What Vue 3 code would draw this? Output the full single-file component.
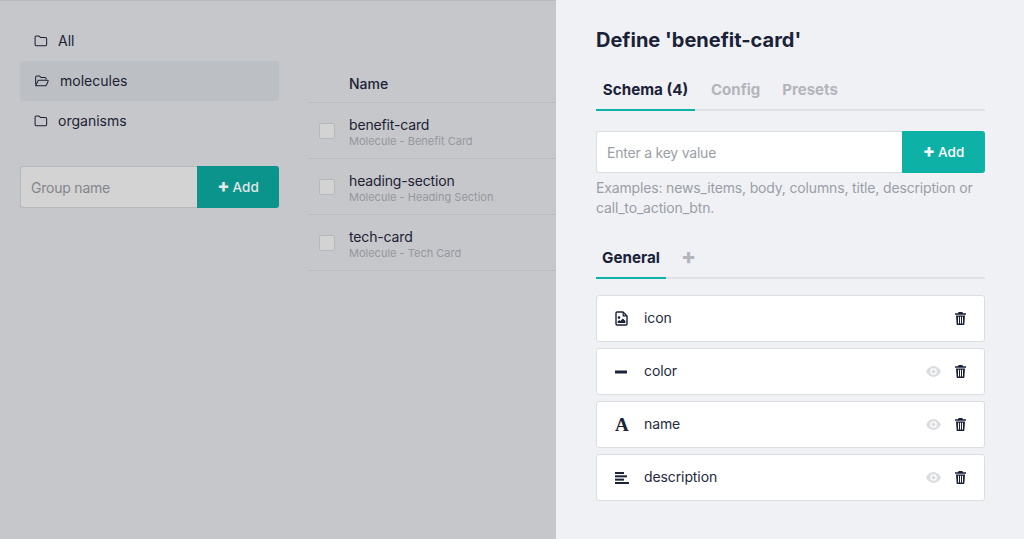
<script setup>
const groups = [
  { name: 'All', open: false },
  { name: 'molecules', open: true },
  { name: 'organisms', open: false }
]
const rows = [
  { name: 'benefit-card', sub: 'Molecule - Benefit Card' },
  { name: 'heading-section', sub: 'Molecule - Heading Section' },
  { name: 'tech-card', sub: 'Molecule - Tech Card' }
]
const fields = [
  { name: 'icon', type: 'image', eye: false },
  { name: 'color', type: 'minus', eye: true },
  { name: 'name', type: 'font', eye: true },
  { name: 'description', type: 'lines', eye: true }
]
</script>

<template>
  <div class="page">
    <div class="under">
      <aside class="side">
        <ul class="groups">
          <li v-for="g in groups" :key="g.name" class="group" :class="{ active: g.open }">
            <svg v-if="!g.open" class="folder" viewBox="0 0 16 14" fill="none" stroke="currentColor" stroke-width="1.2" stroke-linejoin="round">
              <path d="M1.100 2.600c0-.8.6-1.400 1.400-1.400h3.100l1.700 1.700h5.900c.8 0 1.400.6 1.400 1.400v6.800c0 .8-.6 1.400-1.400 1.400H2.500c-.8 0-1.400-.6-1.400-1.400z" />
            </svg>
            <svg v-else class="folder open" viewBox="0 0 17 14" fill="none" stroke="currentColor" stroke-width="1.2" stroke-linejoin="round">
              <path d="M1.100 11.200V2.600c0-.8.6-1.400 1.400-1.400h3.100l1.700 1.700h4.600c.8 0 1.300.6 1.300 1.300v1.100" />
              <path d="M1.200 12.500 3.900 6.600c.2-.4.5-.6 1-.6h10c.6 0 1 .6.8 1.100l-2 4.600c-.2.5-.6.8-1.100.8z" />
            </svg>
            <span>{{ g.name }}</span>
          </li>
        </ul>
        <div class="addrow dim">
          <div class="field">Group name</div>
          <div class="btn"><b class="plus">+</b> Add</div>
        </div>
      </aside>
      <section class="table">
        <div class="thead">Name</div>
        <div v-for="r in rows" :key="r.name" class="row">
          <span class="check"></span>
          <div class="cell">
            <div class="rname">{{ r.name }}</div>
            <div class="rsub">{{ r.sub }}</div>
          </div>
        </div>
      </section>
    </div>

    <div class="panel">
      <h1 class="title">Define 'benefit-card'</h1>
      <div class="tabs">
        <span class="tab on">Schema (4)</span>
        <span class="tab">Config</span>
        <span class="tab">Presets</span>
      </div>
      <div class="addrow key">
        <div class="field">Enter a key value</div>
        <div class="btn"><b class="plus">+</b> Add</div>
      </div>
      <p class="help">Examples: news_items, body, columns, title, description or call_to_action_btn.</p>
      <div class="tabs sub">
        <span class="tab on">General</span>
        <span class="tab add">+</span>
      </div>
      <ul class="cards">
        <li v-for="f in fields" :key="f.name" class="card">
          <span class="ficon">
            <svg v-if="f.type === 'image'" width="13" height="15" viewBox="0 0 13 15">
              <path fill="none" stroke="#1a2238" stroke-width="1.4" stroke-linejoin="round" d="M1 2c0-.6.4-1 1-1h6l4 4v8c0 .6-.4 1-1 1H2c-.6 0-1-.4-1-1z" />
              <path fill="#1a2238" d="M7.600 1h1.200v3.200H12v1.200H7.600z" />
              <circle cx="4" cy="6.600" r="1.300" fill="#1a2238" />
              <path fill="#1a2238" d="M2.600 12v-1.500l1.600-1.400 1.200 1 2.500-2.600 2.500 2.600V12z" />
            </svg>
            <svg v-else-if="f.type === 'minus'" width="12" height="14" viewBox="0 0 12 14">
              <rect x="0" y="5.500" width="12" height="3" rx=".5" fill="#1a2238" />
            </svg>
            <span v-else-if="f.type === 'font'" class="serif-a">A</span>
            <svg v-else width="14" height="12" viewBox="0 0 14 12" fill="#1a2238">
              <rect x="0" y="0" width="9" height="2" />
              <rect x="0" y="3.330" width="12" height="2" />
              <rect x="0" y="6.660" width="9" height="2" />
              <rect x="0" y="10" width="14" height="2" />
            </svg>
          </span>
          <span class="fname">{{ f.name }}</span>
          <svg v-if="f.eye" class="eye" width="15" height="11" viewBox="0 0 15 11">
            <path fill="#dcdde1" fill-rule="evenodd" d="M7.500 0C4.200 0 1.600 2.100 0 5.500 1.600 8.900 4.200 11 7.500 11s5.900-2.100 7.500-5.500C13.400 2.100 10.800 0 7.500 0zm0 2.200a3.300 3.300 0 1 1 0 6.600 3.300 3.300 0 0 1 0-6.600z" />
            <circle cx="7.500" cy="5.500" r="2" fill="#dcdde1" />
          </svg>
          <svg class="trash" width="11" height="13" viewBox="0 0 11 13">
            <path fill="#1a2238" d="M3.600 0h3.800l.6 1.300H11v1.400H0V1.300h3z" />
            <path fill="#1a2238" fill-rule="evenodd" d="M1 3.400h9l-.6 8.500c0 .6-.5 1.100-1.100 1.100H2.700c-.6 0-1.100-.5-1.100-1.100zm2 1.400v6.700h1V4.800zm2 0v6.700h1V4.800zm2 0v6.700h1V4.800z" />
          </svg>
        </li>
      </ul>
    </div>
  </div>
</template>

<style>
html, body { margin: 0; padding: 0; }
</style>

<style scoped>
.page {
  width: 1024px;
  height: 539px;
  display: flex;
  overflow: hidden;
  font-family: Inter, "Liberation Sans", sans-serif;
  font-size: 14px;
  color: #1a2238;
}
.under {
  width: 556px;
  box-sizing: border-box;
  flex: none;
  display: flex;
  background: #c6c7cb;
  border-top: 1px solid #b9babe;
  padding: 20px 0 0 20px;
  gap: 30px;
  color: #1c2233;
}
.side { width: 259px; flex: none; }
.groups { list-style: none; margin: 0; padding: 0; }
.group {
  height: 40px;
  box-sizing: border-box;
  display: flex;
  align-items: center;
  padding: 0 0 1px 14px;
  gap: 10px;
  border-radius: 3px;
}
.group.active { background: #bcbfc4; }
.folder { width: 14px; height: 12px; flex: none; }
.folder.open { width: 16px; }
.addrow { display: flex; height: 42px; box-sizing: border-box; }
.addrow.dim { margin-top: 25px; }
.field {
  flex: 1;
  box-sizing: border-box;
  display: flex;
  align-items: center;
  padding-left: 10px;
  background: #fff;
  border: 1px solid #dcdde1;
  border-right: 0;
  border-radius: 3px 0 0 3px;
  color: #9a9ea6;
  letter-spacing: -.22px;
}
.btn {
  width: 83px;
  flex: none;
  display: flex;
  align-items: center;
  justify-content: center;
  gap: 3px;
  background: #0eb1a6;
  color: #fff;
  font-size: 13.500px;
  font-weight: 500;
  border-radius: 0 3px 3px 0;
}
.plus { font-size: 18px; font-weight: 800; line-height: 1; margin-top: -2px; }
.dim .field { background: #d3d3d4; border-color: #b7b8bc; color: #848689; }
.dim .btn { background: #0a948b; color: #e4e8e8; width: 82px; }
.table { flex: 1; padding-top: 44px; }
.thead {
  height: 38px;
  box-sizing: border-box;
  padding-left: 40px;
  font-weight: 500;
  border-bottom: 1px solid #babbc0;
  display: flex;
  align-items: center;
}
.row {
  height: 56px;
  box-sizing: border-box;
  display: flex;
  align-items: center;
  gap: 14px;
  padding-left: 10px;
  border-bottom: 1px solid #babbc0;
}
.check {
  width: 14px;
  height: 14px;
  flex: none;
  background: #d3d3d4;
  border: 1px solid #b7b8bc;
  border-radius: 2px;
}
.cell { padding-top: 3px; }
.rname { line-height: 17px; letter-spacing: -.15px; }
.rsub { font-size: 11px; line-height: 14px; margin-top: 1px; color: #95979d; }
.panel {
  flex: 1;
  box-sizing: border-box;
  background: #f0f1f5;
  padding: 28px 39px 0 40px;
}
.title { margin: 0; font-size: 20px; line-height: 24px; font-weight: 700; color: #1a2238; }
.tabs {
  display: flex;
  height: 42px;
  margin-top: 17px;
  border-bottom: 2px solid #e0e1e5;
  box-sizing: border-box;
  gap: 10px;
}
.tab {
  padding: 0 6px 2px;
  height: 42px;
  box-sizing: border-box;
  display: flex;
  align-items: center;
  font-size: 15px;
  font-weight: 700;
  color: #b3b5ba;
}
.tab.on {
  color: #1a2238;
  border-bottom: 2px solid #0eb1a6;
  width: 99px;
  justify-content: center;
  padding: 0;
  font-size: 15.200px;
}
.key { margin-top: 20px; }
.help { margin: 5px 0 0; font-size: 14px; line-height: 20px; color: #9a9ea6; letter-spacing: -.16px; }
.tabs.sub { margin-top: 19px; }
.tabs.sub .tab.on { width: 70px; margin-right: -1px; }
.tab.add { font-size: 22px; font-weight: 800; padding: 0 6px 4px; }
.cards { list-style: none; margin: 16px 0 0; padding: 0; display: flex; flex-direction: column; gap: 6px; }
.card {
  height: 47px;
  box-sizing: border-box;
  display: flex;
  align-items: center;
  background: #fff;
  border: 1px solid #dcdde1;
  border-radius: 3px;
  padding: 0 18px;
}
.ficon { width: 29px; flex: none; display: flex; align-items: center; }
.serif-a { font-family: "Liberation Serif", serif; font-weight: 700; font-size: 19px; line-height: 1; }
.fname { flex: 1; color: #232a3d; letter-spacing: -.1px; margin-bottom: 2px; }
.eye { margin-right: 14px; }
</style>
